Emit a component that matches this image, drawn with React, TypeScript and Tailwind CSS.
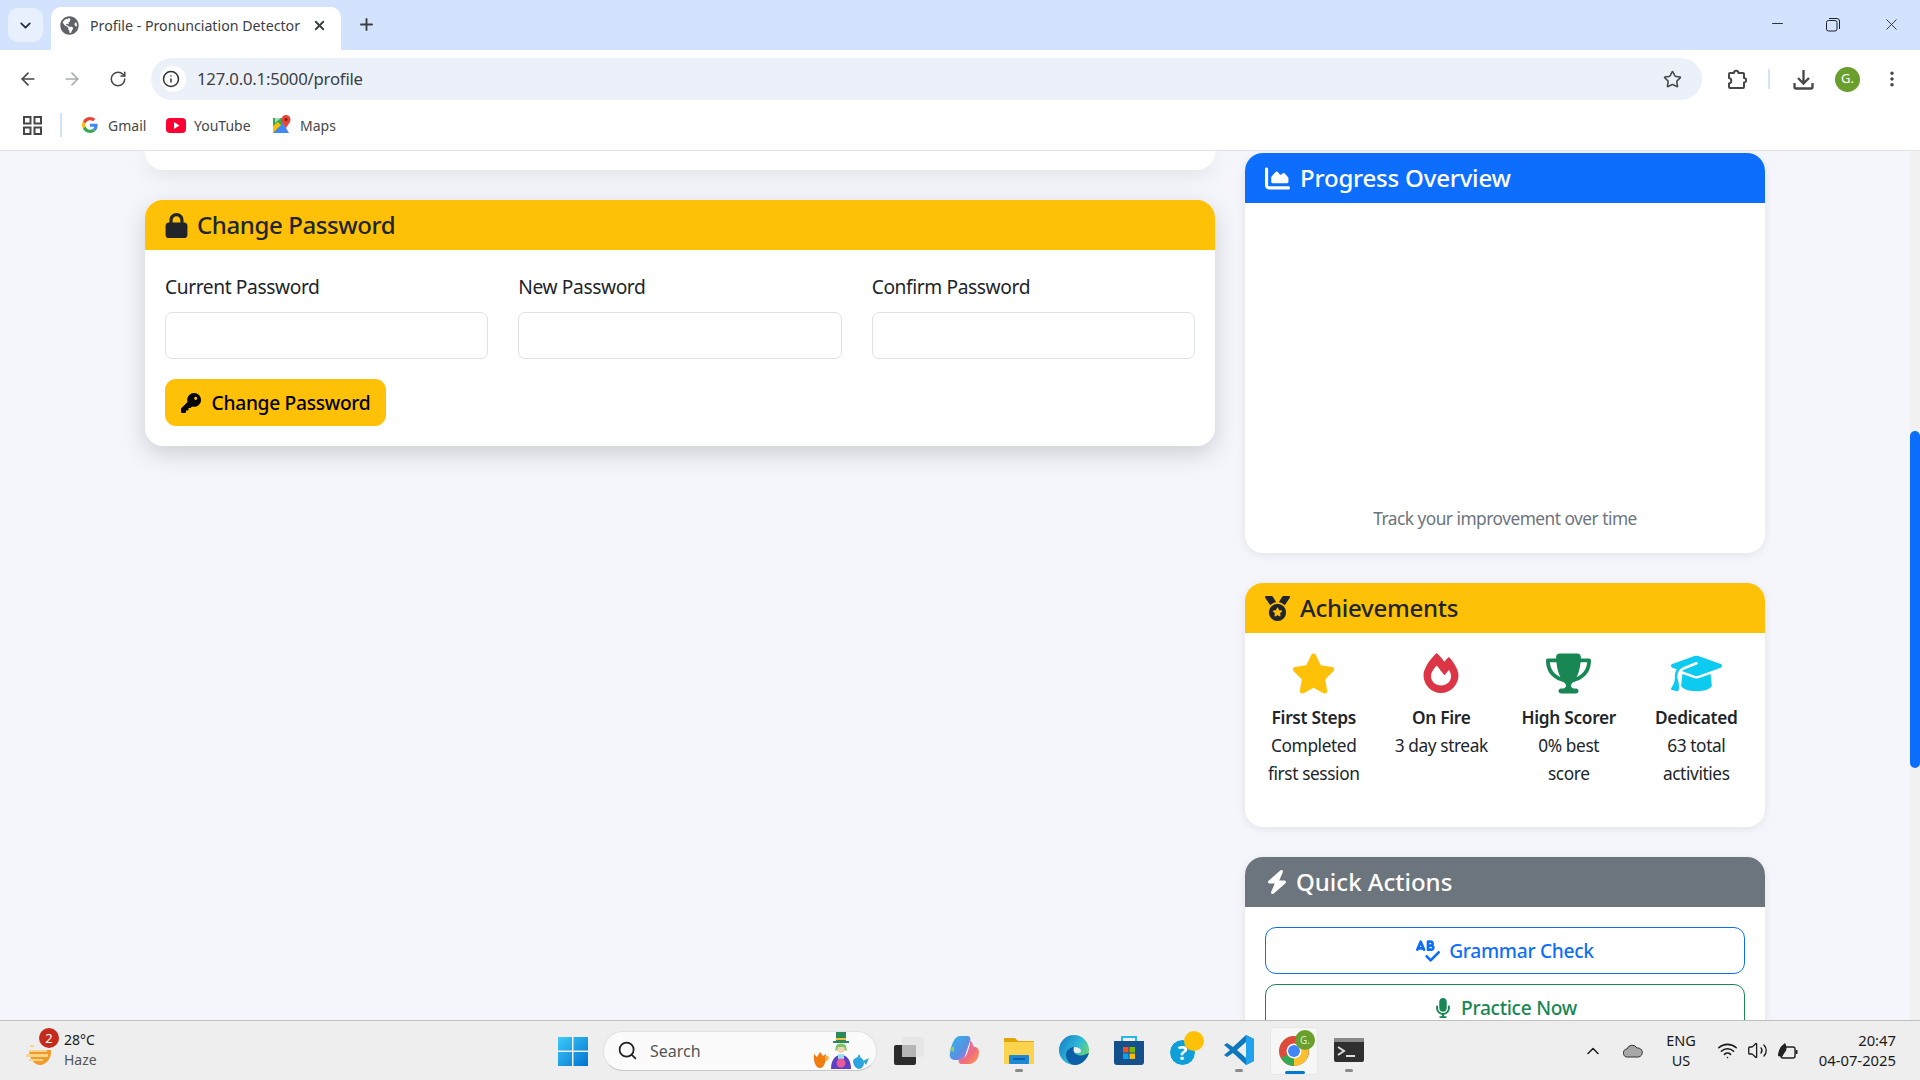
import React from "react";
import { ArrowLeft, ArrowRight, RotateCw, Info, Star, X, Plus, ChevronDown, Minus, EllipsisVertical, ChevronUp, Search, Wifi, Volume2 } from "lucide-react";
import { FaGlobeAmericas, FaFireAlt } from "react-icons/fa";
import { FaLock, FaKey, FaChartArea, FaMedal, FaBolt, FaSpellCheck, FaMicrophone, FaStar, FaTrophy, FaGraduationCap } from "react-icons/fa6";

function GoogleG({ size = 16 }: { size?: number }) {
  return (
    <svg width={size} height={size} viewBox="0 0 48 48">
      <path fill="#EA4335" d="M24 9.5c3.5 0 6.7 1.2 9.2 3.6l6.9-6.9C35.9 2.4 30.4 0 24 0 14.6 0 6.5 5.4 2.6 13.2l8 6.2C12.5 13.7 17.8 9.5 24 9.5z" />
      <path fill="#4285F4" d="M46.9 24.5c0-1.6-.1-3.100-.4-4.500H24v9h12.900c-.6 3-2.200 5.500-4.800 7.200l7.700 6c4.500-4.200 7.100-10.300 7.100-17.700z" />
      <path fill="#FBBC05" d="M10.600 28.600c-.5-1.400-.8-3-.8-4.600s.3-3.200.8-4.600l-8-6.200C.9 16.500 0 20.100 0 24s.9 7.500 2.600 10.800l8-6.200z" />
      <path fill="#34A853" d="M24 48c6.500 0 11.900-2.100 15.800-5.800l-7.700-6c-2.100 1.400-4.900 2.300-8.100 2.300-6.200 0-11.500-4.200-13.400-9.900l-8 6.200C6.500 42.600 14.600 48 24 48z" />
    </svg>
  );
}

function Tabs() {
  return (
    <div className="h-[50px] bg-[#d3e3fd] flex shrink-0">
      <div className="w-[35px] h-[34px] mt-[8px] ml-[8px] rounded-[10px] bg-[#e8f0fe] flex items-center justify-center">
        <ChevronDown size={17} strokeWidth={2.6} className="text-[#2b2f36]" />
      </div>
      <div className="w-[290px] h-[43px] mt-[7px] ml-[8px] bg-white rounded-t-[10px] flex items-center pl-[9px] pb-[6px]">
        <FaGlobeAmericas size={19} className="text-[#5f6368]" />
        <span className="ml-[11px] w-[222px] text-[14.2px] text-[#3c4043] whitespace-nowrap">Profile - Pronunciation Detector</span>
        <X size={15} strokeWidth={3} className="text-[#3c4043]" />
      </div>
      <Plus size={19} strokeWidth={2.4} className="text-[#3c4043] mt-[15px] ml-[16px]" />
      <div className="flex-1" />
      <div className="flex items-start">
        <Minus size={17} strokeWidth={1.3} className="text-[#202124] mt-[15px]" />
        <svg width="14" height="14" viewBox="0 0 14 14" className="mt-[18px] ml-[40px]" fill="none" stroke="#202124" strokeWidth="1">
          <rect x="0.5" y="2.500" width="10.500" height="10.500" rx="2" />
          <path d="M3 0.500h8a2.500 2.500 0 0 1 2.500 2.500v8" />
        </svg>
        <X size={19} strokeWidth={1.1} className="text-[#202124] mt-[15px] ml-[42px] mr-[19px]" />
      </div>
    </div>
  );
}

function Toolbar() {
  return (
    <div className="h-[50px] bg-white rounded-t-[10px] flex items-center shrink-0 relative">
      <ArrowLeft size={20} strokeWidth={2} className="text-[#474747] ml-[18px] mt-[8px]" />
      <ArrowRight size={20} strokeWidth={2} className="text-[#a9abae] ml-[24px] mt-[8px]" />
      <RotateCw size={18} strokeWidth={2} className="text-[#474747] ml-[27px] mt-[8px]" />
      <div className="ml-[24px] w-[1551px] h-[42px] mt-[8px] bg-[#ebf0f9] rounded-full flex items-center pl-[9px]">
        <div className="w-[26px] h-[26px] rounded-full bg-white flex items-center justify-center">
          <Info size={18} strokeWidth={2} className="text-[#2f3033] mr-[4px]" />
        </div>
        <span className="ml-[11px] text-[16.7px] text-[#3c4043] tracking-[-0.2px]">127.0.0.1:5000/profile</span>
        <div className="flex-1" />
        <Star size={19} strokeWidth={2} className="text-[#474747] mr-[20px]" />
      </div>
      <svg width="21" height="21" viewBox="0 0 21 21" fill="none" stroke="#474747" strokeWidth="2" strokeLinejoin="round" className="ml-[24px] mt-[8px]">
        <path d="M4 4h4a2.200 2.200 0 0 1 4.400 0H17a1 1 0 0 1 1 1v4a2.200 2.200 0 0 1 0 4.400V18a1 1 0 0 1-1 1H4a1 1 0 0 1-1-1v-3.500a2.800 2.800 0 0 0 0-5.500V5a1 1 0 0 1 1-1z" />
      </svg>
      <div className="w-[2px] h-[20px] bg-[#d3e3fd] ml-[21px] mt-[8px]" />
      <svg width="21" height="21" viewBox="0 0 21 21" fill="none" stroke="#474747" strokeWidth="2.300" className="ml-[23px] mt-[8px]">
        <path d="M10.500 1v13M5 9l5.500 5.500L16 9" />
        <path d="M1.500 14v4a1.500 1.500 0 0 0 1.500 1.500h15a1.500 1.500 0 0 0 1.500-1.500v-4" />
      </svg>
      <div className="w-[25px] h-[25px] rounded-full bg-[#6a9f2e] text-white text-[13px] flex items-center justify-center ml-[21px] mt-[8px]">G.</div>
      <EllipsisVertical size={20} strokeWidth={2.2} className="text-[#474747] ml-[22px] mt-[8px]" />
    </div>
  );
}

function Bookmarks() {
  return (
    <div className="h-[51px] bg-white border-b border-[#e3e3e3] flex items-center shrink-0 text-[14px] text-[#474747]">
      <svg width="19" height="19" viewBox="0 0 19 19" fill="none" stroke="#474747" strokeWidth="2" className="ml-[23px]">
        <rect x="1" y="1" width="6.500" height="6.500" />
        <rect x="11.500" y="1" width="6.500" height="6.500" />
        <rect x="1" y="11.500" width="6.500" height="6.500" />
        <rect x="11.500" y="11.500" width="6.500" height="6.500" />
      </svg>
      <div className="w-[2px] h-[24px] bg-[#d3e3fd] ml-[18px]" />
      <div className="ml-[20px]"><GoogleG size={16} /></div>
      <span className="ml-[10px] w-[38px] whitespace-nowrap">Gmail</span>
      <svg width="20" height="15" viewBox="0 0 20 15" className="ml-[20px]">
        <rect width="20" height="15" rx="4" fill="#ff0033" />
        <path d="M8 4l5.500 3.500L8 11z" fill="#fff" />
      </svg>
      <span className="ml-[8px] w-[58px] whitespace-nowrap">YouTube</span>
      <svg width="18" height="20" viewBox="0 0 18 20" className="ml-[21px]">
        <path d="M0 3h10v15H0z" fill="#34a853" />
        <path d="M0 18L10 8l6 10z" fill="#4285f4" />
        <path d="M0 11l5-4 3 3-8 8z" fill="#fbbc05" />
        <path d="M2 3h6L2 8z" fill="#a8dab5" />
        <path d="M13 0a4.500 4.500 0 0 1 4.500 4.500C17.500 8 14 10 13 14c-1-4-4.500-6-4.500-9.500A4.500 4.500 0 0 1 13 0z" fill="#ea4335" />
        <circle cx="13" cy="4.500" r="1.500" fill="#7a1c14" />
      </svg>
      <span className="ml-[9px] whitespace-nowrap">Maps</span>
    </div>
  );
}

function CardHeader({ icon, title, color, text, gap, track }: { icon: React.ReactNode; title: string; color: string; text: string; gap: string; track: string }) {
  return (
    <div className={`h-[50px] px-[20px] flex items-center text-[24px] leading-none font-medium ${color} ${text} ${gap}`}>
      {icon}
      <span className={track}>{title}</span>
    </div>
  );
}

function Field({ label }: { label: string }) {
  return (
    <div>
      <div className="h-[29px] text-[19.2px] leading-[34px] text-[#212529] mb-[13px] tracking-[-0.4px]">{label}</div>
      <div className="h-[47px] border border-[#dee2e6] rounded-[7px] bg-white" />
    </div>
  );
}

function Achievement({ icon, title, lines }: { icon: React.ReactNode; title: string; lines: string[] }) {
  return (
    <div className="flex flex-col items-center text-center text-[#212529]">
      <div className="h-[40px] flex items-center justify-center mb-[11px]">{icon}</div>
      <div className="text-[17.3px] font-semibold leading-[28px] tracking-[-0.3px]">{title}</div>
      {lines.map((l) => (
        <div key={l} className="text-[17.3px] leading-[28px] tracking-[-0.4px]">{l}</div>
      ))}
    </div>
  );
}

function Page() {
  return (
    <div className="flex-1 min-h-0 bg-[#f4f6fb] flex overflow-hidden">
      <div className="flex-1 flex pl-[145px]">
        <div className="w-[1070px]">
          <div className="h-[19px] bg-white rounded-b-[18px] shadow-[0_6px_20px_rgba(0,0,0,0.08)] mb-[30px]" />
          <div className="bg-white rounded-[18px] shadow-[0_8px_24px_rgba(0,0,0,0.16)] overflow-hidden">
            <CardHeader icon={<FaLock size={25} className="-ml-[1px]" />} title="Change Password" color="bg-[#ffc107]" text="text-[#212529]" gap="gap-[8px]" track="tracking-[-0.4px]" />
            <div className="p-[20px]">
              <div className="grid grid-cols-3 gap-[30px] mb-[20px]">
                <Field label="Current Password" />
                <Field label="New Password" />
                <Field label="Confirm Password" />
              </div>
              <div className="w-[221px] h-[47px] rounded-[11px] bg-[#ffc107] text-black text-[19.2px] font-medium flex items-center justify-center gap-[11px] tracking-[-0.3px]">
                <FaKey size={20} />
                <span className="pt-[1px]">Change Password</span>
              </div>
            </div>
          </div>
        </div>
        <div className="w-[520px] ml-[30px] pt-[2px]">
          <div className="bg-white rounded-[18px] shadow-[0_2px_10px_rgba(0,0,0,0.08)] overflow-hidden h-[400px] flex flex-col">
            <CardHeader icon={<FaChartArea size={25} />} title="Progress Overview" color="bg-[#0d6efd]" text="text-white" gap="gap-[10px]" track="tracking-[-0.2px]" />
            <div className="flex-1" />
            <div className="text-center text-[17.3px] text-[#6c757d] leading-[28px] mb-[20px] tracking-[-0.5px]">Track your improvement over time</div>
          </div>
          <div className="bg-white rounded-[18px] shadow-[0_2px_10px_rgba(0,0,0,0.08)] overflow-hidden h-[244px] mt-[30px]">
            <CardHeader icon={<FaMedal size={25} />} title="Achievements" color="bg-[#ffc107]" text="text-[#212529]" gap="gap-[10px]" track="tracking-[-0.25px]" />
            <div className="grid grid-cols-4 pt-[20px] px-[5px]">
              <Achievement icon={<FaStar size={45} className="text-[#ffc107]" />} title="First Steps" lines={["Completed", "first session"]} />
              <Achievement icon={<FaFireAlt size={40} className="text-[#dc3545]" />} title="On Fire" lines={["3 day streak"]} />
              <Achievement icon={<FaTrophy size={45} className="text-[#198754]" />} title="High Scorer" lines={["0% best", "score"]} />
              <Achievement icon={<FaGraduationCap size={51} className="text-[#0dcaf0]" />} title="Dedicated" lines={["63 total", "activities"]} />
            </div>
          </div>
          <div className="bg-white rounded-t-[18px] shadow-[0_2px_10px_rgba(0,0,0,0.08)] overflow-hidden h-[400px] mt-[30px]">
            <CardHeader icon={<FaBolt size={24} />} title="Quick Actions" color="bg-[#6c757d]" text="text-white" gap="gap-[7px]" track="tracking-[0px]" />
            <div className="px-[20px] pt-[20px]">
              <div className="h-[47px] rounded-[11px] border border-[#0d6efd] text-[#0d6efd] text-[19.2px] font-medium flex items-center justify-center gap-[9px] tracking-[-0.3px]">
                <FaSpellCheck size={24} />
                <span className="pt-[1px]">Grammar Check</span>
              </div>
              <div className="h-[47px] mt-[10px] rounded-[11px] border border-[#198754] text-[#198754] text-[19.2px] font-medium flex items-center justify-center gap-[8px] tracking-[-0.3px]">
                <FaMicrophone size={20} />
                <span className="pt-[1px]">Practice Now</span>
              </div>
            </div>
          </div>
        </div>
      </div>
      <div className="w-[10px] bg-[#f1f1f1] shrink-0">
        <div className="mt-[280px] h-[337px] bg-[#0d6efd] rounded-[5px]" />
      </div>
    </div>
  );
}

function Dot() {
  return <div className="w-[8px] h-[3px] rounded-full bg-[#8a8a8a] mx-auto" />;
}

function Slot({ children, dot, ml }: { children: React.ReactNode; dot?: boolean; ml: string }) {
  return (
    <div className={`w-[32px] h-[48px] flex flex-col items-center shrink-0 ${ml}`}>
      <div className="h-[30px] mt-[8px] flex items-center justify-center">{children}</div>
      <div className="h-[3px] mt-[4px]">{dot ? <Dot /> : null}</div>
    </div>
  );
}

function Taskbar() {
  return (
    <div className="h-[60px] bg-[#eeeeee] border-t border-[#c0c0c0] flex items-center shrink-0 relative text-[#1a1a1a]">
      <div className="relative w-[32px] h-[30px] ml-[25px] shrink-0">
        <svg width="30" height="26" viewBox="0 0 30 26" className="mt-[4px]">
          <path d="M4 10h22c1 8-5 15-11 15S4 18 4 10z" fill="#f39a26" />
          <path d="M5 5h4v2H5zM4 10h18v2H4zM1 14h22v3H1zM4 19h14v2H4z" fill="#f7d58a" />
        </svg>
        <div className="absolute -top-[8px] left-[14px] w-[20px] h-[20px] rounded-full bg-[#c42b1c] text-white text-[13px] leading-[20px] text-center">2</div>
      </div>
      <div className="ml-[7px] w-[40px] text-[14px] leading-[20px] shrink-0 -mt-[1px]">
        <div>28°C</div>
        <div className="text-[#555]">Haze</div>
      </div>
      <svg width="30" height="30" viewBox="0 0 30 30" className="ml-[454px] shrink-0">
        <defs>
          <linearGradient id="win" x1="0" y1="0" x2="1" y2="1">
            <stop offset="0" stopColor="#3ccbfa" />
            <stop offset="1" stopColor="#0272d0" />
          </linearGradient>
        </defs>
        <path d="M0 1h14v13.500H0zM15.500 1H30v13.500H15.500zM0 16h14v14H0zM15.500 16H30v14H15.500z" fill="url(#win)" />
      </svg>
      <div className="ml-[15px] w-[274px] h-[40px] rounded-full bg-[#fbfbfb] border border-[#e2e2e2] border-b-[#c8c8c8] flex items-center shrink-0">
        <Search size={21} strokeWidth={2} className="ml-[13px] text-[#222]" />
        <span className="ml-[12px] text-[16px] text-[#555]">Search</span>
        <div className="flex-1" />
        <svg width="56" height="38" viewBox="0 0 56 38" className="mr-[7px]">
          <path d="M1 22l3 3 3-5 3 4 3-2c0 8-2 14-6 14s-7-6-6-14z" fill="#f07c12" />
          <path d="M12 24c3-1 5 1 3 4l-3 2z" fill="#f9b040" />
          <path d="M23 0h10v9h3v2H20V9h3z" fill="#2b8a5a" />
          <rect x="23" y="6" width="10" height="2" fill="#f4c23c" />
          <circle cx="28" cy="16" r="5" fill="#f4d3b4" />
          <path d="M23 14c1-3 9-3 10 0l1 5-2-1-1-3h-6l-1 3-2 1z" fill="#7ac56b" />
          <path d="M18 37c0-10 5-14 10-14s10 4 10 14z" fill="#5b3fc4" />
          <path d="M25 22h6v5h-6z" fill="#9adcf0" />
          <circle cx="28" cy="31" r="4.500" fill="#ea5a9a" />
          <path d="M40 29c0-2 4-4 6-4s5 3 5 6c0 3-3 6-5 6s-6-3-6-8z" fill="#2aa5e0" />
          <path d="M46 22l1.500 3h-3z" fill="#2aa5e0" />
          <path d="M50 29l6-3-3 7z" fill="#2aa5e0" />
        </svg>
      </div>
      <svg width="30" height="30" viewBox="0 0 30 30" className="ml-[17px] shrink-0">
        <rect x="0" y="9" width="22" height="20" rx="2" fill="#2b2b2b" />
        <rect x="8" y="1" width="22" height="20" rx="2" fill="#e4e4e4" fillOpacity="0.8" />
        <rect x="8" y="9" width="14" height="12" fill="#b5b5b5" />
      </svg>
      <Slot ml="ml-[24px]">
        <svg width="30" height="30" viewBox="0 0 30 30">
          <defs>
            <linearGradient id="cp1" x1="0" y1="0" x2="1" y2="1">
              <stop offset="0" stopColor="#2bb6ea" />
              <stop offset="0.6" stopColor="#5a8fe0" />
              <stop offset="1" stopColor="#d36ad8" />
            </linearGradient>
            <linearGradient id="cp2" x1="0" y1="0" x2="1" y2="1">
              <stop offset="0" stopColor="#c47be0" />
              <stop offset="0.6" stopColor="#f26b7c" />
              <stop offset="1" stopColor="#f9a44a" />
            </linearGradient>
          </defs>
          <path d="M11 1h7c3 0 4 2 3 5l-4 12c-1 4-3 7-7 7H6c-4 0-6-3-5-7 1-7 4-17 10-17z" fill="url(#cp1)" />
          <path d="M19 5c3 0 4 2 5 5l1 2c3 0 5 2 5 5 0 5-3 12-10 12h-7c-3 0-4-2-3-4l4-2c3-1 4-4 5-7l2-7c0-2 0-3-2-4z" fill="url(#cp2)" />
          <path d="M0 15l5 2v-6z" fill="#8ed16a" />
        </svg>
      </Slot>
      <Slot ml="ml-[23px]" dot>
        <svg width="30" height="28" viewBox="0 0 30 28">
          <path d="M0 2h11l3 3h16v23H0z" fill="#e0a508" />
          <rect x="0" y="6" width="30" height="22" fill="#fcd34d" />
          <rect x="5" y="19" width="20" height="9" rx="1" fill="#1e88d8" />
          <rect x="9" y="22" width="12" height="2" fill="#0d5fa8" />
        </svg>
      </Slot>
      <Slot ml="ml-[23px]">
        <svg width="30" height="30" viewBox="0 0 30 30">
          <defs>
            <linearGradient id="edge" x1="0" y1="0" x2="1" y2="0.600">
              <stop offset="0" stopColor="#1277c6" />
              <stop offset="0.6" stopColor="#2fb8d8" />
              <stop offset="1" stopColor="#6fd86b" />
            </linearGradient>
          </defs>
          <circle cx="15" cy="15" r="15" fill="url(#edge)" />
          <path d="M30 18c-2 6-7 12-14 12-5 0-9-5-9-10 0-5 5-9 11-8-3 1-4 3-3 5 1 3 6 4 10 3 2-1 4-2 5-2z" fill="#0c5ea8" />
          <path d="M15 12c4 0 7 2 7 4s-3 2-5 2-3-3-2-6z" fill="#eeeeee" />
        </svg>
      </Slot>
      <Slot ml="ml-[23px]">
        <svg width="30" height="30" viewBox="0 0 30 30">
          <path d="M8 6V2h14v4" fill="none" stroke="#27b7e8" strokeWidth="2" />
          <path d="M0 6h30v21a3 3 0 0 1-3 3H3a3 3 0 0 1-3-3z" fill="#13508c" />
          <path d="M9 12h5.500v5.500H9z" fill="#f25022" />
          <path d="M15.500 12H21v5.500h-5.500z" fill="#7fba00" />
          <path d="M9 18.500h5.500V24H9z" fill="#00a4ef" />
          <path d="M15.500 18.500H21V24h-5.500z" fill="#ffb900" />
        </svg>
      </Slot>
      <Slot ml="ml-[23px]">
        <div className="relative w-[30px] h-[30px]">
          <div className="absolute left-0 top-[4px] w-[27px] h-[27px] rounded-full bg-[#0f9fd8] border border-white text-white text-[20px] font-bold leading-[25px] text-center">?</div>
          <div className="absolute left-[15px] -top-[4px] w-[20px] h-[20px] rounded-full bg-[#ffc107]" />
        </div>
      </Slot>
      <Slot ml="ml-[23px]" dot>
        <svg width="30" height="30" viewBox="0 0 30 30">
          <path d="M22 0l8 4v22l-8 4L9 18l-6 4-3-2 6-5-6-5 3-2 6 4z" fill="#0f78bd" />
          <path d="M22 7l-9 8 9 8z" fill="#eeeeee" />
          <path d="M22 0l8 4v22l-8 4z" fill="#20a2ee" />
        </svg>
      </Slot>
      <div className="ml-[15px] w-[48px] h-[48px] rounded-[4px] bg-[#f7f7f7] border border-[#e6e6e6] flex flex-col items-center relative shrink-0">
        <svg width="30" height="30" viewBox="0 0 30 30" className="mt-[8px]">
          <circle cx="15" cy="15" r="15" fill="#dd4b39" />
          <path d="M15 15L2 22a15 15 0 0 0 13 8z" fill="#34a853" />
          <path d="M15 8h13a15 15 0 0 1-13 22z" fill="#fbc02d" />
          <circle cx="15" cy="15" r="7.500" fill="#fff" />
          <circle cx="15" cy="15" r="6" fill="#4285f4" />
        </svg>
        <div className="absolute top-[2px] right-[2px] w-[20px] h-[20px] rounded-full bg-[#6a9f2e] text-[#dcebc8] text-[10px] leading-[20px] text-center">G.</div>
        <div className="absolute bottom-0 left-[14px] w-[20px] h-[3px] rounded-full bg-[#0078d4]" />
      </div>
      <Slot ml="ml-[15px]" dot>
        <svg width="30" height="24" viewBox="0 0 30 24">
          <rect width="30" height="24" rx="2" fill="#2f2f2f" />
          <rect width="30" height="4" rx="1" fill="#8a8a8a" />
          <path d="M4 9l6 4-6 4" fill="none" stroke="#ddd" strokeWidth="2" />
          <rect x="12" y="17" width="9" height="2" fill="#ddd" />
        </svg>
      </Slot>
      <ChevronUp size={20} strokeWidth={1.8} className="ml-[218px] shrink-0" />
      <svg width="20" height="14" viewBox="0 0 20 14" className="ml-[20px] shrink-0">
        <path d="M5 13a4 4 0 0 1-1-8 5.500 5.500 0 0 1 10-1 4.500 4.500 0 0 1 1.500 9z" fill="#a7a7a7" stroke="#333" strokeWidth="1" />
      </svg>
      <div className="ml-[20px] w-[36px] text-center text-[14.5px] leading-[20px] shrink-0 -mt-[1px]">
        <div>ENG</div>
        <div>US</div>
      </div>
      <Wifi size={21} strokeWidth={1.8} className="ml-[18px] shrink-0" />
      <Volume2 size={21} strokeWidth={1.5} className="ml-[9px] shrink-0" />
      <svg width="22" height="18" viewBox="0 0 22 18" className="ml-[9px] shrink-0">
        <rect x="4" y="5" width="14" height="11" rx="2" fill="none" stroke="#222" strokeWidth="1.400" />
        <rect x="18.500" y="8" width="2" height="4" fill="#222" />
        <path d="M1 14c0-6 3-10 7-13 2 3 2 7 0 9l-3 5z" fill="#222" />
      </svg>
      <div className="flex-1" />
      <div className="mr-[24px] text-right text-[14.8px] leading-[20px] shrink-0 -mt-[1px]">
        <div>20:47</div>
        <div>04-07-2025</div>
      </div>
    </div>
  );
}

export default function App() {
  return (
    <div className="h-screen w-screen overflow-hidden flex flex-col font-['Noto_Sans','Open_Sans',sans-serif]">
      <Tabs />
      <Toolbar />
      <Bookmarks />
      <Page />
      <Taskbar />
    </div>
  );
}
